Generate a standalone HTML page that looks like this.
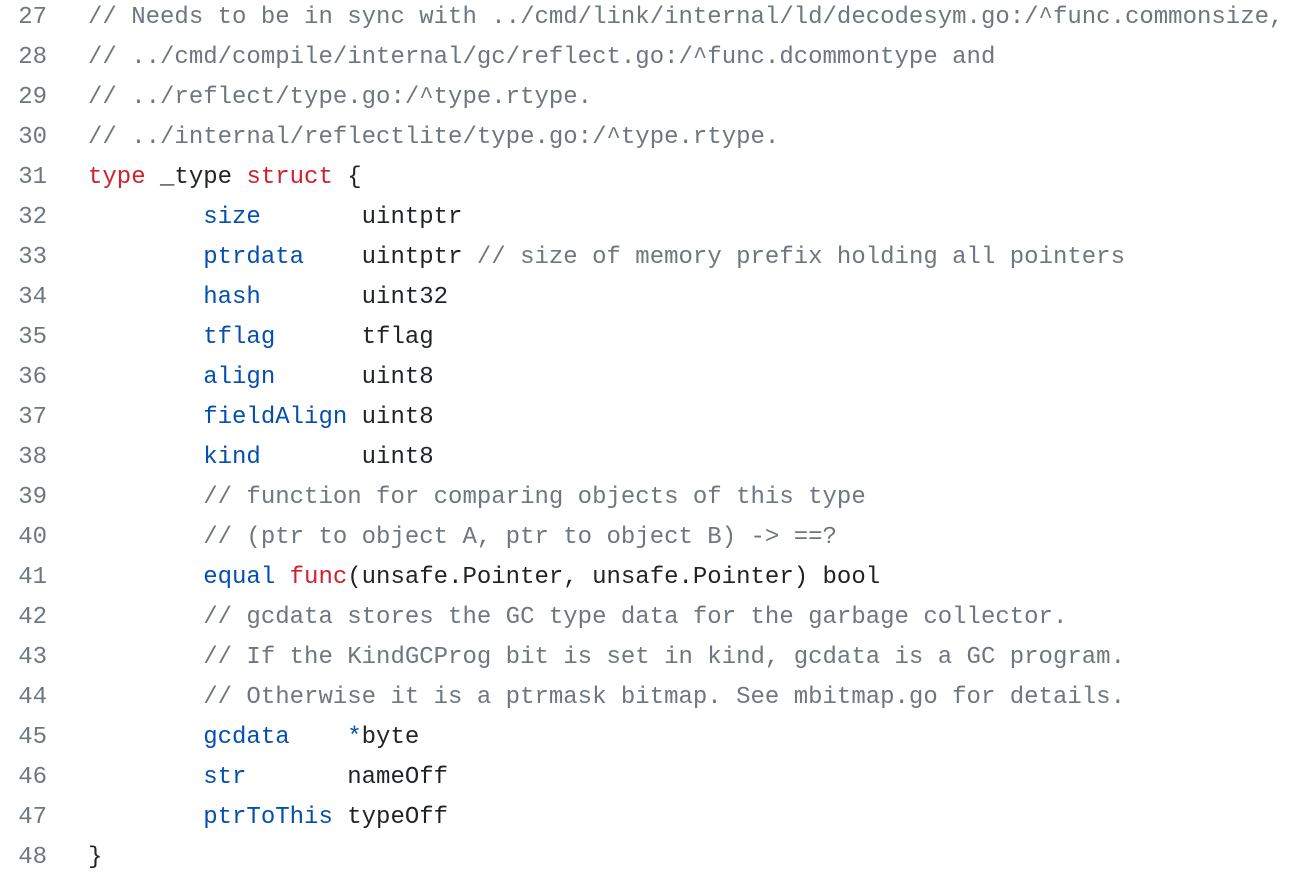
<!DOCTYPE html>
<html><head><meta charset="utf-8"><style>
html,body{margin:0;background:#fff;width:1302px;height:874px;overflow:hidden}
pre{position:absolute;top:-2px;left:0;margin:0;font-family:"Liberation Mono",monospace;font-size:24px;line-height:40px;color:#1f2328;white-space:pre}
.n{display:inline-block;width:47px;text-align:right;color:#6e7781;margin-right:41px}
.c{color:#6e7781}.k{color:#cf222e}.f{color:#0550ae}
</style></head><body><pre><span class="n">27</span><span class="c">// Needs to be in sync with ../cmd/link/internal/ld/decodesym.go:/^func.commonsize,</span>
<span class="n">28</span><span class="c">// ../cmd/compile/internal/gc/reflect.go:/^func.dcommontype and</span>
<span class="n">29</span><span class="c">// ../reflect/type.go:/^type.rtype.</span>
<span class="n">30</span><span class="c">// ../internal/reflectlite/type.go:/^type.rtype.</span>
<span class="n">31</span><span class="k">type</span> _type <span class="k">struct</span> {
<span class="n">32</span>        <span class="f">size</span>       uintptr
<span class="n">33</span>        <span class="f">ptrdata</span>    uintptr <span class="c">// size of memory prefix holding all pointers</span>
<span class="n">34</span>        <span class="f">hash</span>       uint32
<span class="n">35</span>        <span class="f">tflag</span>      tflag
<span class="n">36</span>        <span class="f">align</span>      uint8
<span class="n">37</span>        <span class="f">fieldAlign</span> uint8
<span class="n">38</span>        <span class="f">kind</span>       uint8
<span class="n">39</span>        <span class="c">// function for comparing objects of this type</span>
<span class="n">40</span>        <span class="c">// (ptr to object A, ptr to object B) -&gt; ==?</span>
<span class="n">41</span>        <span class="f">equal</span> <span class="k">func</span>(unsafe.Pointer, unsafe.Pointer) bool
<span class="n">42</span>        <span class="c">// gcdata stores the GC type data for the garbage collector.</span>
<span class="n">43</span>        <span class="c">// If the KindGCProg bit is set in kind, gcdata is a GC program.</span>
<span class="n">44</span>        <span class="c">// Otherwise it is a ptrmask bitmap. See mbitmap.go for details.</span>
<span class="n">45</span>        <span class="f">gcdata</span>    <span class="f">*</span>byte
<span class="n">46</span>        <span class="f">str</span>       nameOff
<span class="n">47</span>        <span class="f">ptrToThis</span> typeOff
<span class="n">48</span>}</pre></body></html>
